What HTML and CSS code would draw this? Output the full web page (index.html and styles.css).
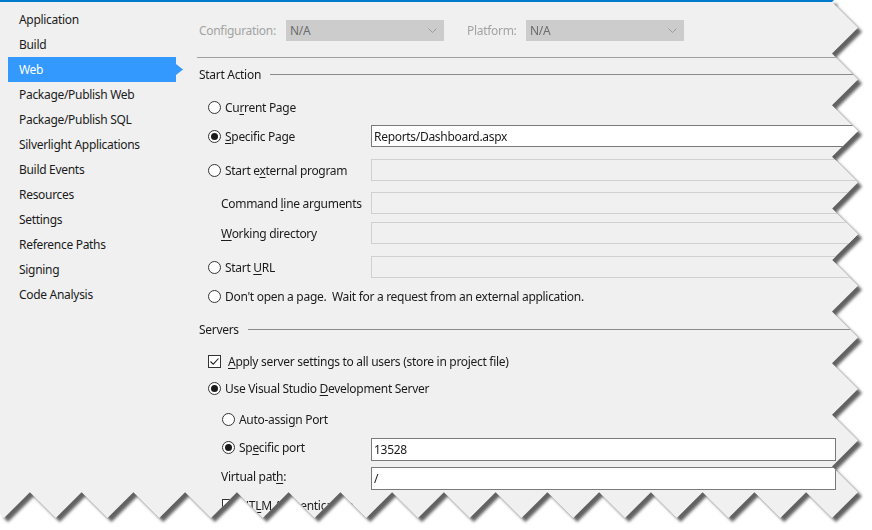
FILE: index.html
```html
<!DOCTYPE html>
<html>
<head>
<meta charset="utf-8">
<link rel="stylesheet" href="styles.css">
</head>
<body>
<div class="frame">
  <div class="panel">
    <div class="topbar"></div>
    <div class="content">
      <nav class="nav">
        <div class="nav-item">Application</div>
        <div class="nav-item">Build</div>
        <div class="nav-item selected">Web</div>
        <div class="nav-item">Package/Publish Web</div>
        <div class="nav-item">Package/Publish SQL</div>
        <div class="nav-item">Silverlight Applications</div>
        <div class="nav-item">Build Events</div>
        <div class="nav-item">Resources</div>
        <div class="nav-item">Settings</div>
        <div class="nav-item">Reference Paths</div>
        <div class="nav-item">Signing</div>
        <div class="nav-item">Code Analysis</div>
      </nav>
      <main class="main">
        <div class="config-row">
          <span class="cfg-label">Configuration:</span>
          <div class="combo"><span>N/A</span><svg width="9" height="5" viewBox="0 0 9 5"><polyline points="0.5,0.5 4.5,4.5 8.5,0.5" fill="none" stroke="#9a9a9a"/></svg></div>
          <span class="cfg-label plat">Platform:</span>
          <div class="combo"><span>N/A</span><svg width="9" height="5" viewBox="0 0 9 5"><polyline points="0.5,0.5 4.5,4.5 8.5,0.5" fill="none" stroke="#9a9a9a"/></svg></div>
        </div>
        <div class="sep"></div>

        <div class="group-head"><span>Start Action</span><div class="rule"></div></div>

        <div class="row mt14">
          <div class="lbl"><span class="radio"></span><span>Cu<u>r</u>rent Page</span></div>
        </div>
        <div class="row mt7">
          <div class="lbl"><span class="radio on"></span><span><u>S</u>pecific Page</span></div>
          <div class="box on">Reports/Dashboard.aspx</div>
        </div>
        <div class="row mt12">
          <div class="lbl"><span class="radio"></span><span>Start e<u>x</u>ternal program</span></div>
          <div class="box"></div>
        </div>
        <div class="row mt11">
          <div class="lbl indent"><span>Command <u>l</u>ine arguments</span></div>
          <div class="box"></div>
        </div>
        <div class="row mt8">
          <div class="lbl indent"><span><u>W</u>orking directory</span></div>
          <div class="box"></div>
        </div>
        <div class="row mt12">
          <div class="lbl"><span class="radio"></span><span>Start <u>U</u>RL</span></div>
          <div class="box"></div>
        </div>
        <div class="row mt7">
          <div class="lbl wide"><span class="radio"></span><span>Don't open a page.&nbsp; Wait for a request from an external application.</span></div>
        </div>

        <div class="group-head mt14"><span>Servers</span><div class="rule"></div></div>

        <div class="row mt13">
          <div class="lbl wide"><span class="check"><svg width="11" height="11" viewBox="0 0 11 11"><polyline points="1.5,5.5 4.2,8.2 9.5,2.5" fill="none" stroke="#222" stroke-width="1.1"/></svg></span><span><u>A</u>pply server settings to all users (store in project file)</span></div>
        </div>
        <div class="row mt5">
          <div class="lbl wide"><span class="radio on"></span><span>Use Visual Studio <u>D</u>evelopment Server</span></div>
        </div>
        <div class="row mt9">
          <div class="lbl indent2"><span class="radio"></span><span>Auto-assi<u>g</u>n Port</span></div>
        </div>
        <div class="row tall mt8">
          <div class="lbl indent2 lift"><span class="radio on"></span><span>Sp<u>e</u>cific port</span></div>
          <div class="box on fixed">13528</div>
        </div>
        <div class="row tall mt6">
          <div class="lbl indent lift"><span>Virtual pat<u>h</u>:</span></div>
          <div class="box on fixed">/</div>
        </div>
        <div class="row mt4">
          <div class="lbl indent2 wide"><span class="check small"></span><span>NT<u>L</u>M Authentication</span></div>
        </div>
      </main>
    </div>
  </div>
</div>
</body>
</html>
```

FILE: styles.css
```css
* { box-sizing: border-box; }
html, body { margin: 0; padding: 0; background: #ffffff; }
body {
  width: 872px;
  height: 530px;
  overflow: hidden;
  font-family: "Noto Sans", "Open Sans", sans-serif;
  font-size: 12px;
  letter-spacing: -0.3px;
  color: #1b1b1b;
}
.frame {
  width: 872px;
  height: 530px;
  filter: drop-shadow(4px 4px 1.5px rgba(0, 0, 0, 0.62));
}
.panel {
  width: 872px;
  height: 530px;
  background: #f0f0f0;
  display: flex;
  flex-direction: column;
  clip-path: polygon(0 0, 834px 0, 832px 2px,
    858px 27.8px, 832px 53.6px, 858px 79.4px, 832px 105.2px, 858px 131px, 832px 156.8px,
    858px 182.6px, 832px 208.4px, 858px 234.2px, 832px 260px, 858px 285.8px, 832px 311.6px,
    858px 337.4px, 832px 363.2px, 858px 389px, 832px 414.8px, 858px 440.6px, 832px 466.4px,
    858px 492.2px,
    832px 518px, 806.1px 492.2px, 780.25px 518px, 754.4px 492.2px, 728.5px 518px, 702.6px 492.2px,
    676.75px 518px, 650.9px 492.2px, 625px 518px, 599.1px 492.2px, 573.25px 518px, 547.4px 492.2px,
    521.5px 518px, 495.6px 492.2px, 469.75px 518px, 443.9px 492.2px, 418px 518px, 392.1px 492.2px,
    366.25px 518px, 340.4px 492.2px, 314.5px 518px, 288.6px 492.2px, 262.75px 518px, 236.9px 492.2px,
    211px 518px, 185.1px 492.2px, 159.25px 518px, 133.4px 492.2px, 107.5px 518px, 81.6px 492.2px,
    55.75px 518px, 29.9px 492.2px, 4px 518px, 0 514px);
}
.topbar { height: 2px; background: #007acc; flex: none; }
.content { display: flex; flex: 1; min-height: 0; }

/* navigation */
.nav { width: 183px; flex: none; padding-top: 5px; }
.nav-item {
  height: 25px;
  line-height: 25px;
  margin-left: 8px;
  width: 168px;
  padding-left: 11px;
  white-space: nowrap;
}
.nav-item.selected {
  width: 175px;
  background: #3399ff;
  color: #ffffff;
  clip-path: polygon(0 0, 168px 0, 168px 7px, 175px 12.5px, 168px 18px, 168px 100%, 0 100%);
}

/* main */
.main {
  flex: 1;
  min-width: 0;
  padding: 18px 0 0 16px;
  display: flex;
  flex-direction: column;
}
.config-row { display: flex; align-items: center; height: 21px; }
.cfg-label { color: #a3a3a3; width: 87px; flex: none; }
.cfg-label.plat { width: 59px; margin-left: 23px; }
.combo {
  width: 158px;
  height: 21px;
  flex: none;
  background: #cccccc;
  color: #6d6d6d;
  display: flex;
  align-items: center;
  justify-content: space-between;
  padding: 0 7px 0 4px;
}
.combo svg { display: block; }
.sep { height: 1px; background: #a0a0a0; margin: 16px 0 0 -2px; }

.group-head { display: flex; align-items: center; gap: 9px; height: 16px; margin-top: 8px; }
.rule { flex: 1; height: 1px; background: #8a8a8a; }

.row { display: flex; align-items: center; height: 22px; }
.row.tall { height: 23px; }
.lbl {
  width: 172px;
  flex: none;
  display: flex;
  align-items: center;
  padding-left: 9px;
  white-space: nowrap;
}
.lbl.wide { width: auto; }
.lbl.indent { padding-left: 22px; }
.lbl.indent2 { padding-left: 23px; }
.lbl.lift { padding-bottom: 5px; }

u { text-decoration: underline; text-underline-offset: 2px; text-decoration-thickness: 1px; }

.radio {
  width: 13px;
  height: 13px;
  flex: none;
  border: 1px solid #333333;
  border-radius: 50%;
  background: #ffffff;
  margin-right: 4px;
  display: flex;
  align-items: center;
  justify-content: center;
}
.radio.on::after {
  content: "";
  width: 7px;
  height: 7px;
  border-radius: 50%;
  background: #1a1a1a;
}
.check {
  width: 13px;
  height: 13px;
  flex: none;
  border: 1px solid #333333;
  background: #ffffff;
  margin-right: 7px;
  display: flex;
  align-items: center;
  justify-content: center;
}
.check.small { margin-right: 5px; }
.check svg { display: block; }

.box {
  flex: 1;
  height: 22px;
  border: 1px solid #d0d0d0;
  background: #f0f0f0;
}
.box.on {
  background: #ffffff;
  border-color: #7a7a7a;
  padding-left: 2px;
  display: flex;
  align-items: center;
}
.box.fixed { flex: none; width: 465px; height: 23px; }

.mt4 { margin-top: 4px; }
.mt5 { margin-top: 5px; }
.mt6 { margin-top: 6px; }
.mt7 { margin-top: 7px; }
.mt8 { margin-top: 8px; }
.mt9 { margin-top: 9px; }
.mt11 { margin-top: 11px; }
.mt12 { margin-top: 12px; }
.mt13 { margin-top: 13px; }
.mt14 { margin-top: 14px; }
```
